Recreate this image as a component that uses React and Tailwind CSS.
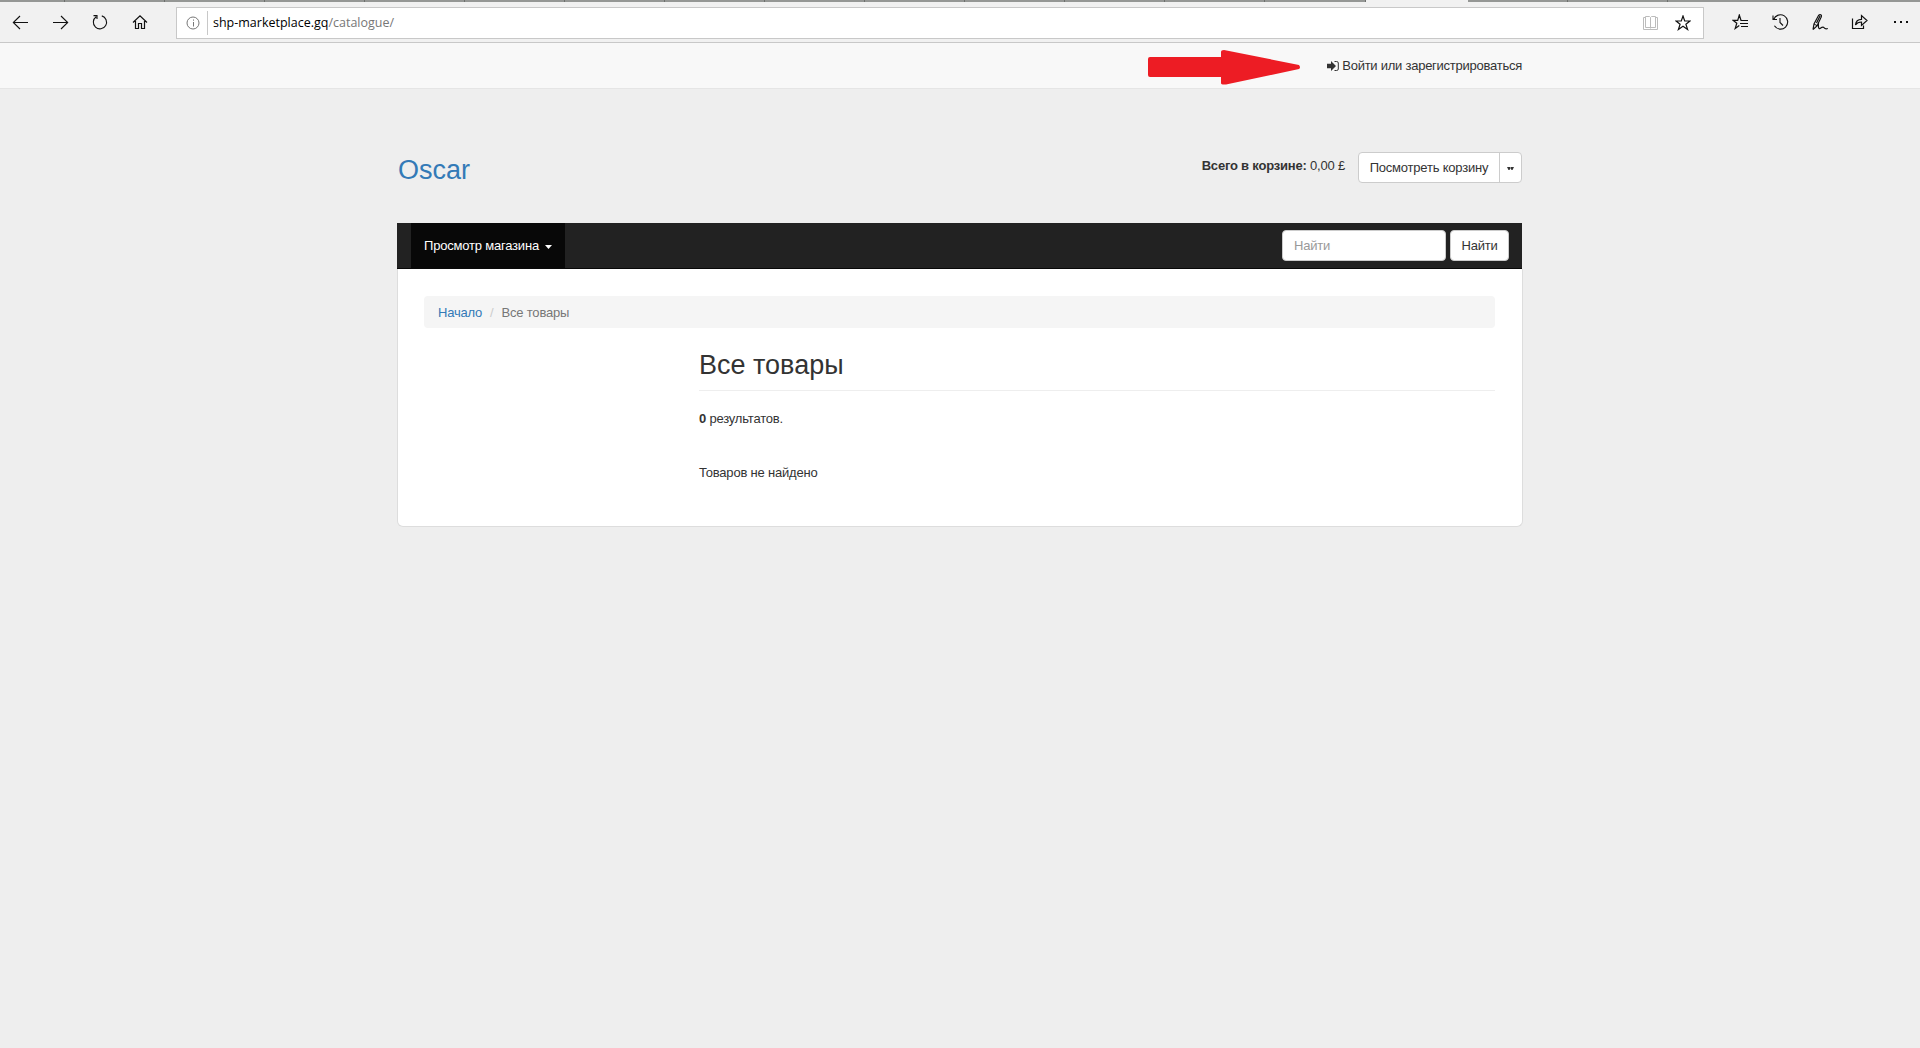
import React from "react";

const tabs = [64, 99, 99, 99, 99, 99, 99, 99, 99, 99, 99, 99, 99];

function Icon({ className = "", w = 16, h = 16, children }) {
  return (
    <svg className={"block shrink-0 " + className} width={w} height={h} viewBox={`0 0 ${w} ${h}`} fill="none" stroke="#111" strokeWidth="1.1">
      {children}
    </svg>
  );
}

function TabStrip() {
  return (
    <div className="flex h-[2px] overflow-hidden bg-[#959795]">
      {tabs.map((w, i) => (
        <div key={i} className="shrink-0 border-r border-[#6d6f6d] box-content" style={{ width: w }} />
      ))}
      <div className="w-[101px] shrink-0 border-r border-[#6d6f6d]" />
      <div className="w-[102px] shrink-0 bg-[#f1f1f1]" />
      <div className="w-[100px] shrink-0 border-r border-[#6d6f6d]" />
      <div className="w-[100px] shrink-0 border-r border-[#6d6f6d]" />
    </div>
  );
}

function BrowserBar() {
  return (
    <div className="flex h-[43px] flex-col border-b border-[#c8c8c8] bg-[#f1f1f1]">
      <TabStrip />
      <div className="flex h-[40px] items-center">
        <Icon className="ml-[12px]" w={17}><path d="M1 8.5H16M8 2L1.3 8.5L8 15" /></Icon>
        <Icon className="ml-[23px]" w={17}><path d="M1 8.5H16M9 2L15.7 8.5L9 15" /></Icon>
        <Icon className="ml-[23px]" w={16}><path d="M9.8 1.9A6.6 6.6 0 1 1 4.2 2.8M1.5 1.6H5V5" /></Icon>
        <Icon className="ml-[24px]" w={16}><path d="M1 8.5L8 1.8L15 8.5M3.500 7V14.500H6.500V9.500H9.500V14.500H12.500V7" strokeWidth="1.2" /></Icon>
        <div className="ml-[28px] mt-[2px] flex h-[32px] w-[1528px] items-center border border-[#c8c8c8] bg-white">
          <Icon className="ml-[9px]" w={14} h={14}>
            <g stroke="#777" strokeWidth="1"><circle cx="7" cy="7" r="6" /><path d="M7.5 6V10.5M7.5 3.5V4.7" /></g>
          </Icon>
          <div className="ml-[7px] h-[24px] w-px bg-[#c8c8c8]" />
          <div className="ml-[5px] whitespace-nowrap font-['Open_Sans','Noto_Sans',sans-serif] text-[12.5px] leading-[20px] tracking-normal text-black">
            shp-marketplace.gq<span className="text-[#777]">/catalogue/</span>
          </div>
          <Icon className="ml-auto" w={15}><path stroke="#bcbcbc" strokeWidth="1" d="M7.5 2.5V13.5M2.500 1.500H6.500L7.500 2.500L8.500 1.500H12.500V12.500H2.500ZM2.5 2.5H.5V14.5H14.5V2.5H12.5" /></Icon>
          <Icon className="ml-[17px] mr-[12px]" w={16}><path strokeWidth="1.2" d="M8 1L9.700 6H15L10.900 9.200L12.600 14.500L8 11.300L3.400 14.500L5.100 9.200L1 6H6.300Z" /></Icon>
        </div>
        <Icon className="ml-[28px]" w={17}><path strokeWidth="1.2" d="M9.500 6.300H9L7.3 1L5.7 6.300H1L4.8 9.300L3.200 14.500L7.3 11.500M9 6.500H16M8 9.500H16M9 12.500H16" /></Icon>
        <Icon className="ml-[23px]" w={17}><path d="M1.7 5.5A7.2 7.2 0 1 1 2.4 11.8M1 1.5V5.5H5M8 4V8.5L11 11.5" /></Icon>
        <Icon className="ml-[23px]" w={17}><path strokeWidth="1.2" d="M1 15.500L2 10L6.500 1.500Q8 0 9.300 1.200Q9.800 2.500 8.500 4.500L5 12L1 15.500M2.500 10.500Q4 10.500 4.800 11.800M8 2L4.500 9M6.500 9Q6 15.500 8 14.500C9.500 13.500 11 12.300 12 13.700C13 15 14.500 15 15.800 14.500" /></Icon>
        <Icon className="ml-[22px]" w={17}><path strokeWidth="1.2" d="M1.500 4.500V14.500H12.500V11.500M4.500 11C4.800 7.500 6.800 5.300 10.500 5.300V1.500L16 6.500L10.500 11.500V8C7.800 8 5.800 9 4.500 11Z" /></Icon>
        <div className="ml-[26px] flex gap-[4px]">
          <i className="size-[2px] bg-[#111]" /><i className="size-[2px] bg-[#111]" /><i className="size-[2px] bg-[#111]" />
        </div>
      </div>
    </div>
  );
}

function AccountBar() {
  return (
    <div className="flex h-[46px] border-b border-[#e5e5e5] bg-[#f8f8f8]">
      <div className="ml-[1148px] flex w-[374px]">
        <svg className="mt-[6px] block" width="153" height="37" viewBox="0 0 153 37">
          <path fill="#ed1c24" d="M2 8H73V3Q73 1 76 1L151 16Q153 18.500 151 20L78 35.500Q73 36 73 34V28H2Q0 28 0 26V10Q0 8 2 8Z" />
        </svg>
        <a className="ml-auto mt-[14px] flex h-[18px] items-center whitespace-nowrap tracking-[-0.25px]">
          <svg className="mr-[3px] mb-px block" width="12" height="12" viewBox="0 0 12 12">
            <path fill="#333" d="M0 3.800H4V1L9 6L4 11V8.200H0Z" />
            <path fill="none" stroke="#333" d="M7.500 1.500H9.500Q11.300 1.500 11.300 3V9Q11.300 10.500 9.500 10.500H7.500" />
          </svg>
          Войти или зарегистрироваться
        </a>
      </div>
    </div>
  );
}

const Caret = ({ className }) => <svg className={className} width="7" height="4" viewBox="0 0 7 4"><path fill="currentColor" d="M0 0H7L3.500 4Z" /></svg>;

function Masthead() {
  return (
    <header className="flex h-[134px]">
      <a className="ml-px mt-[62px] h-[38px] text-[27px] leading-[38px] tracking-normal text-[#337ab7]">Oscar</a>
      <div className="ml-auto mt-[68px] whitespace-nowrap"><b>Всего в корзине:</b> 0,00 £</div>
      <div className="ml-[13px] mt-[63px] flex h-[31px] rounded-[4px] border border-[#ccc] bg-white">
        <div className="flex w-[141px] items-center justify-center whitespace-nowrap border-r border-[#ccc]">Посмотреть корзину</div>
        <div className="flex w-[21px] items-center justify-center">
          <svg className="mt-[2px]" width="7" height="3" viewBox="0 0 7 3"><path fill="#333" d="M0 0H3L3.500 1L4 0H7L5.500 3H4.500L3.500 1L2.500 3H1.500Z" /></svg>
        </div>
      </div>
    </header>
  );
}

export default function App() {
  return (
    <div className="min-h-[1048px] bg-[#eee] font-['Liberation_Sans',Arial,sans-serif] text-[13px] leading-[18px] tracking-[-0.2px] text-[#333]">
      <BrowserBar />
      <AccountBar />
      <div className="ml-[397px] w-[1125px]">
        <Masthead />
        <nav className="flex h-[46px] items-start border-b border-[#080808] bg-[#222]">
          <div className="ml-[14px] flex h-[45px] w-[154px] items-center whitespace-nowrap bg-[#080808] pl-[13px] text-white">
            Просмотр магазина<Caret className="ml-[6px] mt-[3px]" />
          </div>
          <div className="ml-auto mr-[13px] mt-[7px] flex gap-[4px]">
            <div className="h-[31px] w-[164px] rounded-[4px] border border-[#ccc] bg-white pl-[11px] leading-[29px] text-[#999]">Найти</div>
            <div className="h-[31px] w-[59px] rounded-[4px] border border-[#ccc] bg-white text-center leading-[29px]">Найти</div>
          </div>
        </nav>
        <main className="h-[258px] w-[1126px] rounded-b-[6px] border border-t-0 border-[#ddd] bg-white pl-[26px] pr-[27px] pt-[27px]">
          <div className="flex h-[32px] items-center rounded-[4px] bg-[#f5f5f5] pl-[14px] pt-px">
            <a className="text-[#337ab7]">Начало</a>
            <span className="mx-[8px] text-[#ccc]">/</span>
            <span className="text-[#777]">Все товары</span>
          </div>
          <section className="ml-[275px]">
            <h1 className="h-[63px] border-b border-[#eee] pt-[22px] text-[27px] leading-[30px] tracking-normal">Все товары</h1>
            <p className="mt-[19px]"><b>0</b> результатов.</p>
            <p className="mt-[36px]">Товаров не найдено</p>
          </section>
        </main>
      </div>
    </div>
  );
}
